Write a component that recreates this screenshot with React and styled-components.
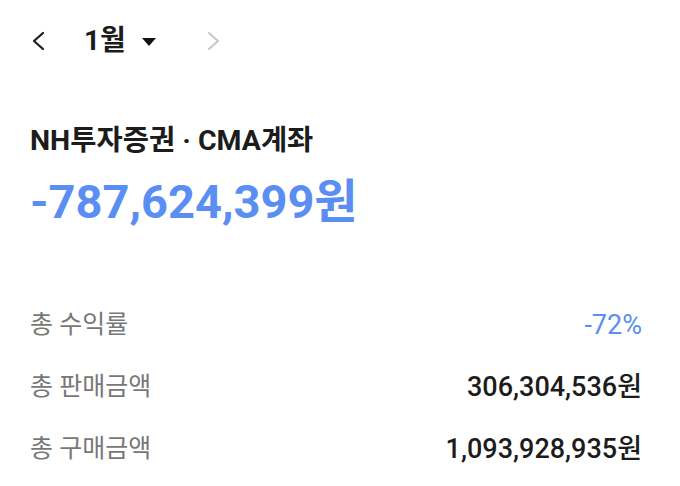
import React from "react";
import styled, { createGlobalStyle } from "styled-components";

const GlobalStyle = createGlobalStyle`
  html, body {
    margin: 0;
    padding: 0;
    background: #ffffff;
  }
  body {
    font-family: Roboto, "Noto Sans CJK KR", sans-serif;
    color: #1a1a1a;
  }
`;

const Page = styled.div`
  width: 680px;
  height: 486px;
  box-sizing: border-box;
  padding: 0 38px 0 30px;
  display: flex;
  flex-direction: column;
  overflow: hidden;
`;

const MonthBar = styled.div`
  height: 82px;
  display: flex;
  align-items: center;
`;

const ArrowButton = styled.button`
  border: 0;
  background: none;
  padding: 0;
  width: 16px;
  height: 24px;
  display: flex;
  align-items: center;
  justify-content: center;
  color: ${({ disabled }) => (disabled ? "#c9c9c9" : "#1c1c1c")};
`;

const MonthPicker = styled.div`
  display: flex;
  align-items: center;
  margin: 0 50px 0 38px;
  font-size: 28px;
  font-weight: 700;
  line-height: 34px;
  color: #1c1c1c;
  gap: 16px;
`;

const Caret = styled.span`
  width: 0;
  height: 0;
  border-left: 7px solid transparent;
  border-right: 7px solid transparent;
  border-top: 8px solid #111;
  margin-top: 2px;
`;

const Account = styled.section`
  padding-top: 41px;
`;

const AccountName = styled.div`
  font-size: 28.5px;
  font-weight: 700;
  color: #1c1c1c;
  line-height: 36px;
`;

const Balance = styled.div`
  margin-top: 15px;
  font-size: 47px;
  font-weight: 700;
  color: #5a8ef2;
  line-height: 56px;
`;

const Stats = styled.dl`
  margin: 78px 0 0;
  display: flex;
  flex-direction: column;
  gap: 28px;
`;

const StatRow = styled.div`
  display: flex;
  justify-content: space-between;
  align-items: center;
  height: 34px;
`;

const StatLabel = styled.dt`
  font-size: 25px;
  line-height: 34px;
  color: #787878;
`;

const StatValue = styled.dd`
  margin: 0;
  font-size: 27px;
  line-height: 34px;
  font-weight: ${({ accent }) => (accent ? 400 : 500)};
  color: ${({ accent }) => (accent ? "#5a8ef2" : "#1c1c1c")};
`;

const Chevron = ({ dir }) => (
  <svg width="16" height="20" viewBox="0 0 16 20" fill="none">
    <path
      d={dir === "left" ? "M13 2 L4 10 L13 18" : "M3 2 L12 10 L3 18"}
      stroke="currentColor"
      strokeWidth="2.2"
      strokeLinecap="round"
      strokeLinejoin="round"
    />
  </svg>
);

const stats = [
  { label: "총 수익률", value: "-72%", accent: true },
  { label: "총 판매금액", value: "306,304,536원" },
  { label: "총 구매금액", value: "1,093,928,935원" }
];

const App = () => (
  <>
    <GlobalStyle />
    <Page>
      <MonthBar>
        <ArrowButton aria-label="이전 달">
          <Chevron dir="left" />
        </ArrowButton>
        <MonthPicker>
          1월
          <Caret />
        </MonthPicker>
        <ArrowButton aria-label="다음 달" disabled>
          <Chevron dir="right" />
        </ArrowButton>
      </MonthBar>
      <Account>
        <AccountName>NH투자증권 · CMA계좌</AccountName>
        <Balance>-787,624,399원</Balance>
      </Account>
      <Stats>
        {stats.map(s => (
          <StatRow key={s.label}>
            <StatLabel>{s.label}</StatLabel>
            <StatValue accent={s.accent}>{s.value}</StatValue>
          </StatRow>
        ))}
      </Stats>
    </Page>
  </>
);

export default App;
